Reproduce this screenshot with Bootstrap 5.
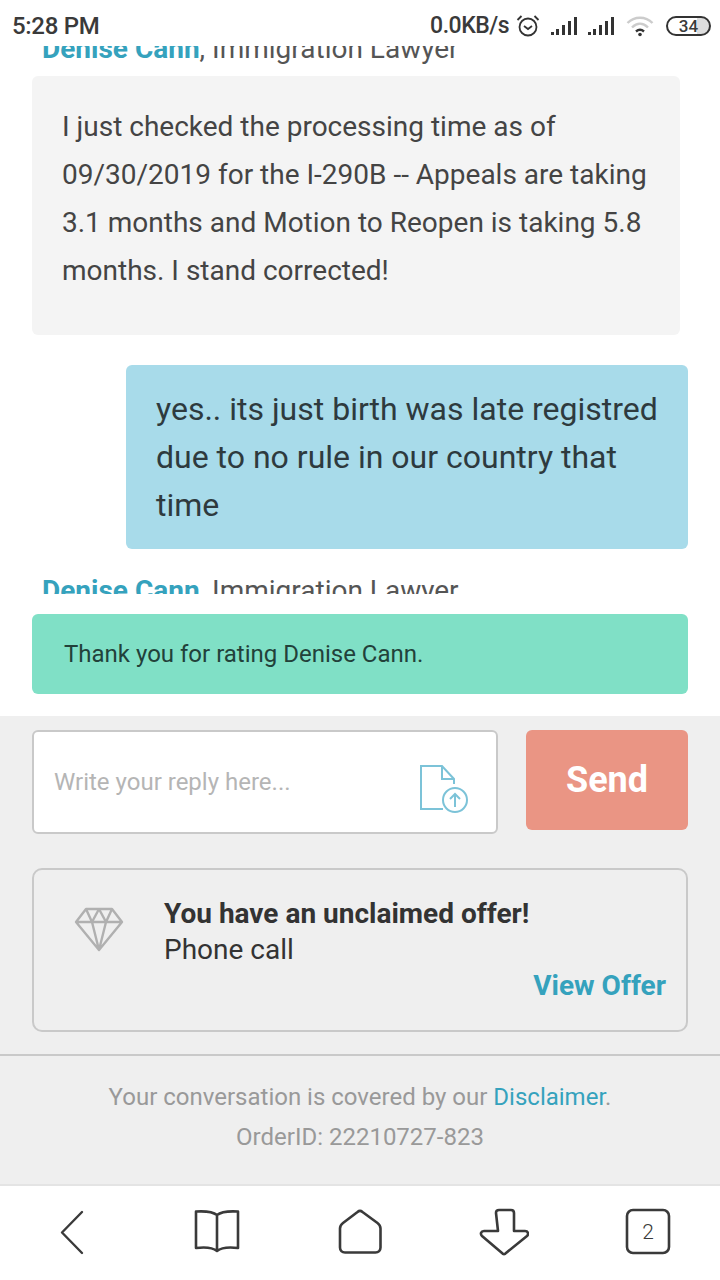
<!DOCTYPE html>
<html lang="en">
<head>
<meta charset="utf-8">
<title>Conversation</title>
<link href="https://cdn.jsdelivr.net/npm/bootstrap@5.3.0/dist/css/bootstrap.min.css" rel="stylesheet">
<style>
html,body{width:720px;height:1280px;overflow:hidden;background:#fff;font-family:Roboto,sans-serif;color:#333}
.status-strip{height:46px;padding:6px 9px 0 12px;color:#3a3a3a}
.status-time{font-size:24px;font-weight:500;letter-spacing:-.3px}
.status-net{font-size:23px;font-weight:500;letter-spacing:-.5px}
.gap-alarm{margin-left:7px}
.gap-sig{margin-left:11px}
.gap-wifi{margin-left:12px}
.batt{width:45px;height:20px;border:2px solid #333;border-radius:10px;font-size:17px;font-weight:500;line-height:16px;text-align:center;background:linear-gradient(90deg,#fff 70%,#ddd 70%)}
.chat-pane{height:549px;overflow:hidden;position:relative}
.who-top{margin-top:-16px;height:36px;overflow:hidden;padding-left:42px;line-height:38px}
.who{font-size:28px;color:#555}
.who b{color:#35a2bd;font-weight:700}
.who-bottom{height:20px;overflow:hidden;padding-left:42px;margin-top:25px;line-height:34px}
.msg-in{margin:10px 40px 0 32px;background:#f4f4f4;border-radius:6px;padding:27px 30px 40px;font-size:28px;line-height:48px;height:259px;color:#444}
.msg-out{margin:30px 32px 0 126px;background:#a8dbea;border-radius:6px;padding:20px 30px;font-size:32px;line-height:48px;height:184px;color:#2e3a3e}
.thanks{margin:19px 32px 22px;height:80px;background:#80e0c6;border-radius:6px;padding:0 32px;font-size:24px;color:#22413a}
.gray-panel{background:#efefef;height:470px;padding:14px 32px 0}
.reply-box{width:466px;height:104px;background:#fff;border:2px solid #c9c9c9;border-radius:6px;padding:0 25px 0 20px;font-size:24px;color:#b5b5b5}
.upload-ico{margin-top:12px}
.send-btn{width:162px;height:100px;background:#ea9584;border:0;border-radius:6px;color:#fff;font-size:36px;font-weight:700}
.offer-box{height:164px;margin-top:34px;border:2px solid #c9c9c9;border-radius:10px;padding:26px 20px 0 40px;color:#333;position:relative}
.offer-title{font-size:28px;font-weight:700;line-height:36px}
.offer-sub{font-size:28px;line-height:36px}
.offer-gem{width:90px;flex:none;padding-top:10px}
.offer-link{font-size:28px;font-weight:700;color:#35a2bd;text-decoration:none;right:20px;bottom:23px}
.divider-line{border-top:2px solid #c9c9c9;margin:22px -32px 0;padding-top:21px;text-align:center;font-size:24px;line-height:40px;color:#999}
.divider-line a{color:#35a2bd;text-decoration:none}
.nav-strip{border-top:2px solid #e4e4e4;height:94px;margin-top:-2px;background:#fff;padding-left:1px}
.nav-cell{width:144px;display:flex;justify-content:center;padding-top:22px}
</style>
</head>
<body>
<div class="status-strip d-flex justify-content-between align-items-center">
  <div class="status-time">5:28 PM</div>
  <div class="d-flex align-items-center">
    <span class="status-net">0.0KB/s</span>
    <svg class="gap-alarm" width="24" height="24" viewBox="0 0 24 24" fill="none" stroke="#333" stroke-width="1.800"><circle cx="12" cy="13" r="8.500"/><path d="M8 12l4 3 4-3M1.500 6l4-4M22.500 6l-4-4"/></svg>
    <svg class="gap-sig" width="26" height="20" viewBox="0 0 26 20" fill="#333"><rect x="0" y="16" width="3" height="3"/><rect x="5" y="13" width="3" height="6"/><rect x="11" y="9" width="3" height="10"/><rect x="17" y="5" width="3" height="14"/><rect x="23" y="1" width="3" height="18"/></svg>
    <svg class="gap-sig" width="26" height="20" viewBox="0 0 26 20" fill="#333"><rect x="0" y="16" width="3" height="3"/><rect x="5" y="13" width="3" height="6"/><rect x="11" y="9" width="3" height="10"/><rect x="17" y="5" width="3" height="14"/><rect x="23" y="1" width="3" height="18"/></svg>
    <svg class="gap-wifi" width="28" height="22" viewBox="0 0 28 22" fill="none" stroke-width="2.400"><path d="M1.500 8c7-7 18-7 25 0" stroke="#ccc"/><path d="M6 12.500c5-5 11-5 16 0" stroke="#ccc"/><path d="M10 16.500c2.500-2.300 5.500-2.300 8 0" stroke="#333"/><circle cx="14" cy="19.500" r="1.800" fill="#333"/></svg>
    <div class="batt gap-wifi">34</div>
  </div>
</div>
<div class="chat-pane">
  <div class="who-top who"><b>Denise Cann</b>, Immigration Lawyer</div>
  <div class="msg-in">I just checked the processing time as of 09/30/2019 for the I-290B -- Appeals are taking 3.1 months and Motion to Reopen is taking 5.8 months. I stand corrected!</div>
  <div class="msg-out">yes.. its just birth was late registred due to no rule in our country that time</div>
  <div class="who-bottom who"><b>Denise Cann</b>, Immigration Lawyer</div>
</div>
<div class="thanks d-flex align-items-center">Thank you for rating Denise Cann.</div>
<div class="gray-panel">
  <div class="d-flex justify-content-between align-items-start">
    <div class="reply-box d-flex justify-content-between align-items-center">
      <span>Write your reply here...</span>
      <svg class="upload-ico" width="52" height="50" viewBox="0 0 52 50" fill="none" stroke="#7cc3d8" stroke-width="2"><path d="M24 46H2V3h21l12 13v5M23 3v13h12"/><circle cx="36" cy="37" r="12"/><path d="M36 44V31M31 36l5-5 5 5"/></svg>
    </div>
    <button class="send-btn" type="button">Send</button>
  </div>
  <div class="offer-box d-flex">
    <div class="offer-gem">
      <svg width="50" height="46" viewBox="0 0 50 46" fill="none" stroke="#b0b0b0" stroke-width="2.400" stroke-linejoin="round"><path d="M12 3h26l10 13-23 28L2 16zM2 16h46M12 3l6 13 7 28 7-28 6-13M18 16l7-13 7 13"/></svg>
    </div>
    <div>
      <div class="offer-title">You have an unclaimed offer!</div>
      <div class="offer-sub">Phone call</div>
    </div>
    <a class="offer-link position-absolute" href="#">View Offer</a>
  </div>
  <div class="divider-line">
    Your conversation is covered by our <a href="#">Disclaimer</a>.<br>OrderID: 22210727-823
  </div>
</div>
<div class="nav-strip d-flex">
  <div class="nav-cell"><svg width="30" height="50" viewBox="0 0 30 50" fill="none" stroke="#3a3a3a" stroke-width="2.400" stroke-linecap="round" stroke-linejoin="round"><path d="M24 4L4 24.500 24 45"/></svg></div>
  <div class="nav-cell"><svg width="46" height="48" viewBox="0 0 46 48" fill="none" stroke="#3a3a3a" stroke-width="2.600" stroke-linejoin="round"><path d="M23 7C18 3 10 3 2 3.500V40c8-1 16-1 21 3 5-4 13-4 21-3V3.500C36 3 28 3 23 7zM23 7v36"/></svg></div>
  <div class="nav-cell"><svg width="46" height="48" viewBox="0 0 46 48" fill="none" stroke="#3a3a3a" stroke-width="2.600" stroke-linejoin="round"><path d="M20.500 4c1.500-1.300 3.500-1.300 5 0l15 11c2 1.500 3 3.500 3 5.500v19c0 3-2 5-5 5H8c-3 0-5-2-5-5v-19c0-2 1-4 3-5.500z"/></svg></div>
  <div class="nav-cell"><svg width="50" height="48" viewBox="0 0 50 48" fill="none" stroke="#3a3a3a" stroke-width="2.600" stroke-linejoin="round"><path d="M17 5c0-2 1-3 3-3h12c2 0 3 1 3 3v18h11c3 0 4 3 2 5L27 45c-1 1.500-3 1.500-4 0L3 28c-2-2-1-5 2-5h14z"/></svg></div>
  <div class="nav-cell"><svg width="46" height="48" viewBox="0 0 46 48" fill="none"><rect x="2" y="2" width="42" height="43" rx="6" stroke="#3a3a3a" stroke-width="2.600"/><text x="23" y="31" text-anchor="middle" fill="#3a3a3a" font-family="Roboto,sans-serif" font-weight="300" font-size="21">2</text></svg></div>
</div>
<script src="https://cdn.jsdelivr.net/npm/bootstrap@5.3.0/dist/js/bootstrap.bundle.min.js"></script>
</body>
</html>
